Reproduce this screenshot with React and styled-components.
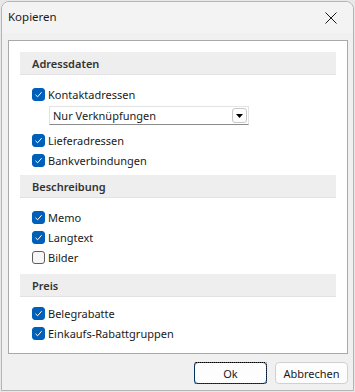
import React from "react";
import styled, { createGlobalStyle } from "styled-components";

const Global = createGlobalStyle`
  html, body { margin: 0; padding: 0; background: #e8e8e8; }
  body { font-family: "Noto Sans", "Open Sans", sans-serif; font-size: 11px; color: #1a1a1a; }
  * { box-sizing: border-box; }
`;

const Window = styled.div`
  margin: 1px 0 0 1px;
  width: 353px;
  height: 390px;
  background: #f0f0f0;
  border: 1px solid #b4b4b4;
  border-radius: 8px 8px 0 0;
  display: flex;
  flex-direction: column;
  overflow: hidden;
`;

const TitleBar = styled.div`
  height: 31px;
  flex: none;
  display: flex;
  align-items: center;
  justify-content: space-between;
  padding-left: 6px;
  background: #f3f3f3;
`;

const Title = styled.span`
  font-size: 11.5px;
  color: #1a1a1a;
  margin-top: -2px;
`;

const CloseBtn = styled.div`
  width: 46px;
  height: 31px;
  display: flex;
  align-items: center;
  justify-content: center;
  margin-right: -1px;
`;

const Body = styled.div`
  flex: 1;
  display: flex;
  flex-direction: column;
  padding: 7px 5px 6px 6px;
  gap: 8px;
`;

const Panel = styled.div`
  background: #fff;
  border: 1px solid #a9a9a9;
  height: 314px;
  padding: 11px 11px 0 11px;
  display: flex;
  flex-direction: column;
`;

const Section = styled.div`
  display: flex;
  flex-direction: column;
  padding-bottom: ${(p) => p.$pb || 0}px;
`;

const Header = styled.div`
  height: 23px;
  background: #eeeeee;
  border-bottom: 1px solid #e2e2e2;
  display: flex;
  align-items: center;
  padding-left: 12px;
  font-weight: 600;
  color: #333;
  font-size: 11px;
`;

const Rows = styled.div`
  display: flex;
  flex-direction: column;
  padding-top: ${(p) => p.$pt}px;
  padding-left: 12px;
`;

const Row = styled.label`
  height: 20px;
  display: flex;
  align-items: center;
  gap: 3px;
  color: #1a1a1a;
  font-size: 11px;
`;

const Box = styled.span`
  width: 13px;
  height: 13px;
  border-radius: 3px;
  flex: none;
  display: flex;
  align-items: center;
  justify-content: center;
  background: ${(p) => (p.$checked ? "#005fb8" : "#f7f7f7")};
  border: 1px solid ${(p) => (p.$checked ? "#005fb8" : "#5f5f5f")};
`;

const SelectRow = styled.div`
  height: 26px;
  padding: 2px 0 0 17px;
`;

const Select = styled.div`
  width: 200px;
  height: 19px;
  background: #fff;
  border: 1px solid #e3e3e3;
  border-bottom-color: #8a8a8a;
  display: flex;
  align-items: center;
  justify-content: space-between;
  padding: 0 1px 0 3px;
  font-size: 11px;
  color: #1a1a1a;
`;

const DropBtn = styled.span`
  width: 15px;
  height: 15px;
  border: 1px solid #c8c8c8;
  border-radius: 3px;
  display: flex;
  align-items: center;
  justify-content: center;
  background: #fdfdfd;
`;

const Footer = styled.div`
  display: flex;
  justify-content: flex-end;
  gap: 8px;
`;

const Button = styled.button`
  position: relative;
  width: 73px;
  height: 22px;
  font-family: inherit;
  font-size: 11px;
  color: #1a1a1a;
  background: #fdfdfd;
  border: 1px solid ${(p) => (p.$default ? "#0067c0" : "#d0d0d0")};
  border-radius: 4px;
  padding: 0;
  &::after {
    content: "";
    display: ${(p) => (p.$default ? "block" : "none")};
    position: absolute;
    inset: -1px;
    border: 1px dotted #000;
    border-radius: 2px;
  }
`;

const Check = ({ checked }) => (
  <Box $checked={checked}>
    {checked && (
      <svg width="9" height="9" viewBox="0 0 9 9">
        <path d="M1.5 4.8 L3.6 6.8 L7.6 2.2" fill="none" stroke="#fff" strokeWidth="1" />
      </svg>
    )}
  </Box>
);

const Item = ({ label, checked = true }) => (
  <Row>
    <Check checked={checked} />
    <span>{label}</span>
  </Row>
);

export default function App() {
  return (
    <>
      <Global />
      <Window>
        <TitleBar>
          <Title>Kopieren</Title>
          <CloseBtn>
            <svg width="12" height="12" viewBox="0 0 12 12">
              <path d="M0.5 0.5 L11.5 11.5 M11.5 0.5 L0.5 11.5" stroke="#1a1a1a" strokeWidth="1" />
            </svg>
          </CloseBtn>
        </TitleBar>
        <Body>
          <Panel>
            <Section $pb={5}>
              <Header>Adressdaten</Header>
              <Rows $pt={9}>
                <Item label="Kontaktadressen" />
                <SelectRow>
                  <Select>
                    <span>Nur Verknüpfungen</span>
                    <DropBtn>
                      <svg width="7" height="4" viewBox="0 0 7 4">
                        <path d="M0 0 H7 L3.5 4 Z" fill="#000" />
                      </svg>
                    </DropBtn>
                  </Select>
                </SelectRow>
                <Item label="Lieferadressen" />
                <Item label="Bankverbindungen" />
              </Rows>
            </Section>
            <Section $pb={7}>
              <Header>Beschreibung</Header>
              <Rows $pt={9}>
                <Item label="Memo" />
                <Item label="Langtext" />
                <Item label="Bilder" checked={false} />
              </Rows>
            </Section>
            <Section>
              <Header>Preis</Header>
              <Rows $pt={6}>
                <Item label="Belegrabatte" />
                <Item label="Einkaufs-Rabattgruppen" />
              </Rows>
            </Section>
          </Panel>
          <Footer>
            <Button $default>Ok</Button>
            <Button>Abbrechen</Button>
          </Footer>
        </Body>
      </Window>
    </>
  );
}
